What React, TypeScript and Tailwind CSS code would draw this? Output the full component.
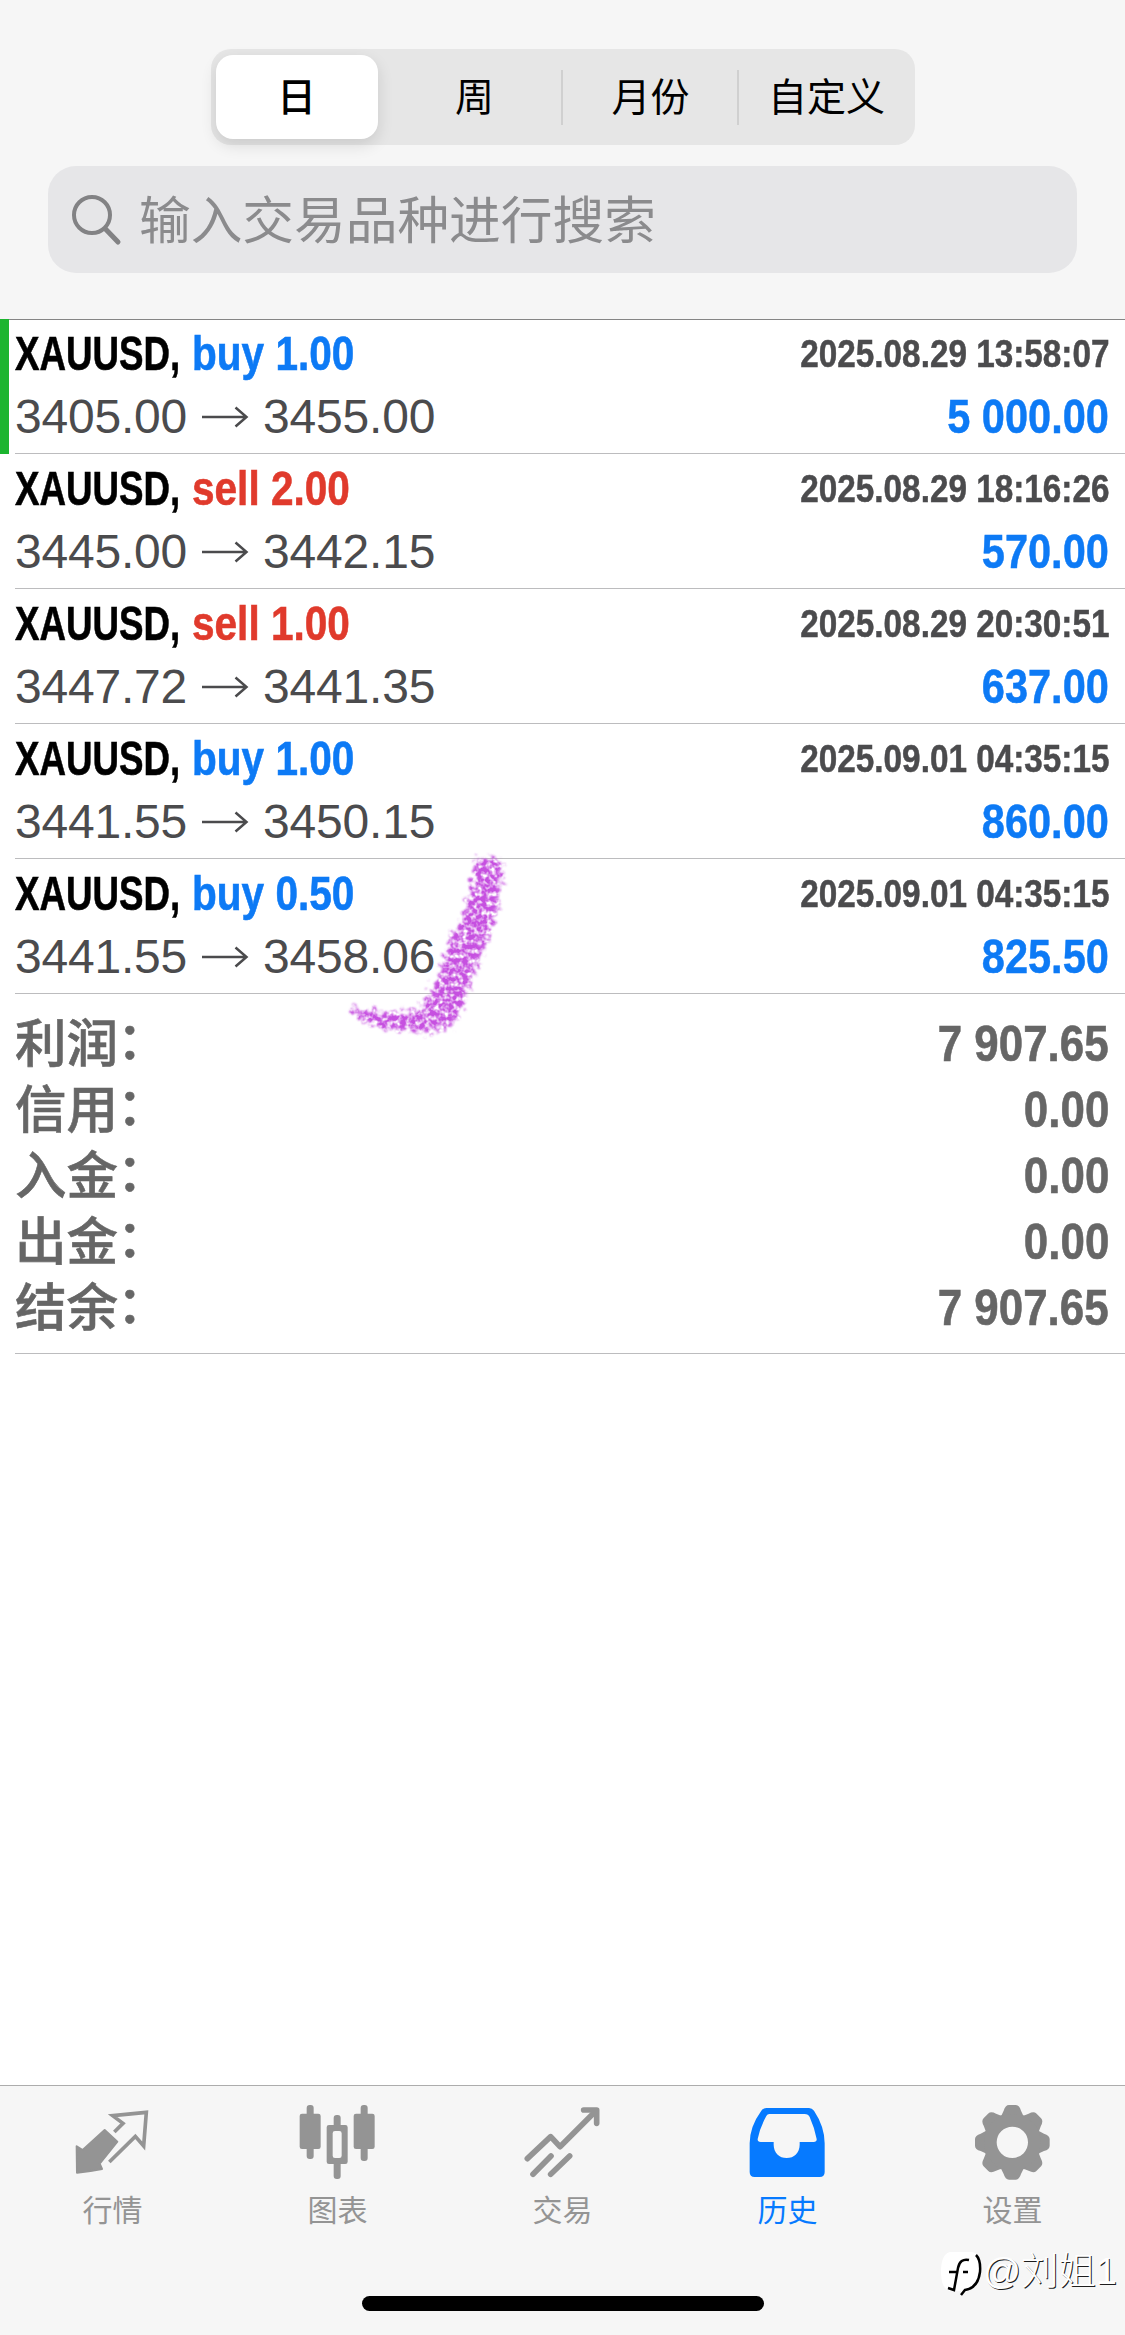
import type { ReactNode } from 'react';
import { clsx } from 'clsx';

interface Deal {
  symbol: string;
  side: 'buy' | 'sell';
  volume: string;
  open: string;
  close: string;
  time: string;
  profit: string;
  marked?: boolean;
}

const deals: Deal[] = [
  { symbol: 'XAUUSD', side: 'buy', volume: '1.00', open: '3405.00', close: '3455.00', time: '2025.08.29 13:58:07', profit: '5 000.00', marked: true },
  { symbol: 'XAUUSD', side: 'sell', volume: '2.00', open: '3445.00', close: '3442.15', time: '2025.08.29 18:16:26', profit: '570.00' },
  { symbol: 'XAUUSD', side: 'sell', volume: '1.00', open: '3447.72', close: '3441.35', time: '2025.08.29 20:30:51', profit: '637.00' },
  { symbol: 'XAUUSD', side: 'buy', volume: '1.00', open: '3441.55', close: '3450.15', time: '2025.09.01 04:35:15', profit: '860.00' },
  { symbol: 'XAUUSD', side: 'buy', volume: '0.50', open: '3441.55', close: '3458.06', time: '2025.09.01 04:35:15', profit: '825.50' },
];

const totals = [
  { label: '利润', value: '7 907.65' },
  { label: '信用', value: '0.00' },
  { label: '入金', value: '0.00' },
  { label: '出金', value: '0.00' },
  { label: '结余', value: '7 907.65' },
];

const periods = ['日', '周', '月份', '自定义'];

function QuotesIcon() {
  return (
    <svg viewBox="97 90 240 240" className="size-20">
      <path
        d="M192 180 L230 215 L177 281 L184 297 Q150 304 109 308 L108 229 L126 240 Z"
        fill="currentColor"
        stroke="currentColor"
        strokeWidth="6"
        strokeLinejoin="round"
      />
      <path
        d="M221 186 L247 160 L216 137 L317 127 L309 228 L284 199 L206 276"
        fill="none"
        stroke="currentColor"
        strokeWidth="11"
        strokeLinejoin="miter"
      />
    </svg>
  );
}

function ChartIcon() {
  return (
    <svg viewBox="772 90 240 240" className="size-20" fill="currentColor">
      <rect x="798" y="105" width="21" height="162" rx="9" />
      <rect x="777" y="131" width="63" height="106" rx="7" />
      <rect x="960" y="105" width="21" height="168" rx="9" />
      <rect x="939" y="131" width="63" height="106" rx="7" />
      <rect x="879" y="135" width="21" height="40" rx="9" />
      <rect x="879" y="270" width="21" height="57" rx="9" />
      <path
        fillRule="evenodd"
        d="M865 165 H914 Q921 165 921 172 V275 Q921 282 914 282 H865 Q858 282 858 275 V172 Q858 165 865 165 Z M883 183 Q876 183 876 190 V257 Q876 264 883 264 H896 Q903 264 903 257 V190 Q903 183 896 183 Z"
      />
    </svg>
  );
}

function TradeIcon() {
  return (
    <svg
      viewBox="127 90 240 240"
      className="size-20"
      fill="none"
      stroke="currentColor"
      strokeWidth="17"
      strokeLinejoin="round"
      strokeLinecap="round"
    >
      <path d="M140 266 L210 200 L238 230 L343 125" />
      <path d="M309 120 H348 V160" />
      <path d="M157 313 L211 258 M210 313 L267 258" />
    </svg>
  );
}

function HistoryIcon() {
  return (
    <svg viewBox="802 90 240 240" className="size-20" fill="currentColor">
      <path
        fillRule="evenodd"
        d="M857 114 H985 Q994 114 1000 122 Q1032 170 1032 220 V306 Q1032 321 1017 321 H822 Q807 321 807 306 V220 Q807 170 842 122 Q848 114 857 114 Z M866 132 Q860 132 857 138 Q838 172 831 207 Q830 216 840 216 H879 V224 C879 248 896 264 918 264 C940 264 957 248 957 224 V216 H999 Q1009 216 1008 207 Q1001 172 987 141 Q983 132 972 132 Z"
      />
    </svg>
  );
}

function SettingsIcon() {
  const angles = [0, 45, 90, 135, 180, 225, 270, 315];
  return (
    <svg viewBox="217 90 240 240" className="size-20" fill="currentColor">
      {angles.map((a) => (
        <path
          key={a}
          transform={`rotate(${a} 335 217)`}
          d="M293 146 Q304 138 309 122 Q314 105 325 105 H345 Q356 105 361 122 Q366 138 377 146 L370 165 H300 Z"
        />
      ))}
      <circle cx="335" cy="217" r="66" fill="none" stroke="currentColor" strokeWidth="38" />
    </svg>
  );
}

const tabs: { label: string; icon: ReactNode; active?: boolean }[] = [
  { label: '行情', icon: <QuotesIcon /> },
  { label: '图表', icon: <ChartIcon /> },
  { label: '交易', icon: <TradeIcon /> },
  { label: '历史', icon: <HistoryIcon />, active: true },
  { label: '设置', icon: <SettingsIcon /> },
];

function PeriodSwitch() {
  return (
    <div className="mx-auto flex h-24 w-[704px] items-center rounded-[20px] bg-[#e6e6e6] text-[39px]">
      {periods.map((p, i) => (
        <div key={p} className="flex h-full flex-1 items-center">
          {i > 1 && <div className="-ml-[2px] h-[55px] w-[2px] bg-[#d0d0d0]" />}
          <div
            className={clsx(
              'flex flex-1 items-center justify-center pt-[2px] text-black',
              i === 0 && 'ml-[5px] mr-[9px] h-[84px] rounded-[17px] bg-white font-medium shadow-[0_6px_16px_rgba(0,0,0,0.12)]',
            )}
          >
            {p}
          </div>
        </div>
      ))}
    </div>
  );
}

function SearchField() {
  return (
    <div className="mx-12 mt-[21px] flex h-[107px] items-center rounded-[28px] bg-[#e6e6e8] pl-6 text-[#8b8b8d]">
      <svg viewBox="0 0 50 52" className="h-[52px] w-[50px]" fill="none" stroke="#828284" strokeLinecap="round">
        <circle cx="20" cy="21" r="18" strokeWidth="4" />
        <path d="M33.500 35 L46 48" strokeWidth="5" />
      </svg>
      <span className="ml-[17px] pt-1 text-[51.700px] leading-none">输入交易品种进行搜索</span>
    </div>
  );
}

function DealRow({ deal }: { deal: Deal }) {
  return (
    <div className="flex h-[135px]">
      <div className={clsx('mr-[6px] w-[9px]', deal.marked && 'bg-[#1cb52f]')} />
      <div className="flex flex-1 justify-between border-b border-[#bcbcbe] pr-4">
        <div className="pt-[3px]">
          <div className="flex h-[63px] items-center text-5xl font-bold [-webkit-text-stroke:0.6px]">
            <span className="w-[177px] origin-left scale-x-[0.765] whitespace-nowrap text-black">{deal.symbol},</span>
            <span
              className={clsx(
                'origin-left scale-x-[0.845] whitespace-nowrap',
                deal.side === 'buy' ? 'text-[#0d7af5]' : 'text-[#e03a2c]',
              )}
            >
              {deal.side} {deal.volume}
            </span>
          </div>
          <div className="flex h-[63px] items-center text-5xl tracking-[-0.200px] text-[#4b4b4d]">
            <span>{deal.open}</span>
            <svg viewBox="0 0 48 24" className="mx-[14px] h-6 w-12" fill="none" stroke="currentColor" strokeWidth="2.500">
              <path d="M1 12 H45 M34.500 2.500 L45.500 12 L34.500 21.500" />
            </svg>
            <span>{deal.close}</span>
          </div>
        </div>
        <div className="flex flex-col items-end pt-[3px] font-bold [-webkit-text-stroke:0.5px]">
          <div className="flex h-[63px] origin-right scale-x-[0.865] items-center text-[38.500px] text-[#4b4b4d]">
            {deal.time}
          </div>
          <div className="flex h-[63px] origin-right scale-x-[0.865] items-center text-5xl text-[#0d7af5]">
            {deal.profit}
          </div>
        </div>
      </div>
    </div>
  );
}

function Totals() {
  return (
    <div className="ml-[15px] h-[360px] border-b border-[#bcbcbe] pr-4 pt-[17px] text-[#666]">
      {totals.map((t) => (
        <div key={t.label} className="flex h-[66px] items-center justify-between [-webkit-text-stroke:0.6px]">
          <span className="pt-[2px] text-[51.500px] font-medium leading-none">
            {t.label}
            <span className="relative -left-px -top-[3px]">：</span>
          </span>
          <span className="origin-right scale-x-[0.878] text-[50px] font-bold">{t.value}</span>
        </div>
      ))}
    </div>
  );
}

// Crayon tick over the last deal
function CrayonMark() {
  return (
    <svg className="pointer-events-none absolute left-[320px] top-[830px] size-[220px]" viewBox="0 0 660 660">
      <defs>
        <filter id="crayon" x="-10%" y="-10%" width="120%" height="120%" colorInterpolationFilters="sRGB">
          <feTurbulence type="fractalNoise" baseFrequency="0.07" numOctaves="2" seed="4" result="noise" />
          <feDisplacementMap in="SourceGraphic" in2="noise" scale="75" xChannelSelector="R" yChannelSelector="G" result="rough" />
          <feGaussianBlur in="rough" stdDeviation="2.5" result="soft" />
          <feColorMatrix in="noise" type="matrix" values="0 0 0 0 0  0 0 0 0 0  0 0 0 0 0  0 0 2.6 0 -0.55" result="grain" />
          <feComposite in="soft" in2="grain" operator="in" />
        </filter>
      </defs>
      <g filter="url(#crayon)">
        <path
          d="M472 82 L544 90 Q546 190 520 280 Q494 350 464 420 Q440 500 405 575 Q385 603 330 604 Q200 606 140 580 Q100 560 92 532 Q150 548 250 545 Q300 545 325 510 Q360 420 385 350 Q435 250 450 190 Z"
          fill="#c650e0"
        />
      </g>
    </svg>
  );
}

function Watermark() {
  return (
    <div className="absolute left-[940px] top-[2246px] flex items-center">
      <svg viewBox="0 0 46 50" className="h-[50px] w-[46px]" fill="none">
        <path d="M10 6 H32 Q41 7 40 24 Q40 40 29 44 L21 50 V45 H10 Q1 43 1 26 Q1 8 10 6 Z" fill="#fff" />
        <path d="M36 9 Q41 14 40 26 Q38 42 25 44 L21 49" stroke="#000" strokeWidth="2.500" />
        <path d="M29 14 Q20 12 18 22 L14 44 L8 42 M9 26 H17 M23 26 H28" stroke="#000" strokeWidth="2.500" />
      </svg>
      <span className="-ml-[3px] text-[37.500px] font-light leading-[50px] text-white [text-shadow:1px_1px_0_rgba(0,0,0,0.9)]">
        @刘姐1
      </span>
    </div>
  );
}

function TabBar() {
  return (
    <div className="flex h-[250px] flex-col justify-between border-t border-[#acacac] bg-[#f6f6f6]">
      <div className="flex">
        {tabs.map((tab) => (
          <div
            key={tab.label}
            className={clsx('flex w-[225px] flex-col items-center pt-[14px]', tab.active ? 'text-[#067aff]' : 'text-[#949494]')}
          >
            {tab.icon}
            <span className="mt-[11px] text-[30px] leading-[40px]">{tab.label}</span>
          </div>
        ))}
      </div>
      <div className="mx-auto mb-6 h-[15px] w-[402px] rounded-full bg-black" />
    </div>
  );
}

export default function App() {
  return (
    <div className="relative flex h-[2335px] w-[1125px] flex-col overflow-hidden bg-white font-['Liberation_Sans','Noto_Sans_CJK_SC',sans-serif]">
      <header className="h-[320px] shrink-0 border-b border-[#858585] bg-[#f6f6f6] pt-[49px]">
        <PeriodSwitch />
        <SearchField />
      </header>
      <main className="-mt-px flex-1">
        {deals.map((deal, i) => (
          <DealRow key={i} deal={deal} />
        ))}
        <Totals />
      </main>
      <TabBar />
      <CrayonMark />
      <Watermark />
    </div>
  );
}
